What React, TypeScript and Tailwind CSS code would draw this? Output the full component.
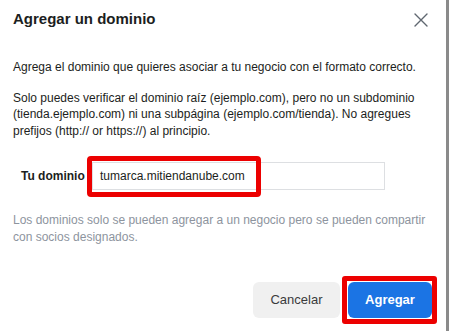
import React from "react";

export default function App() {
  return (
    <div className="w-[449px] h-[331px] flex bg-white overflow-hidden" style={{ fontFamily: '"Liberation Sans", Arial, sans-serif' }}>
      <div className="relative flex-1 flex flex-col bg-white text-[#1c1e21]">
        {/* Header */}
        <div className="flex items-start justify-between pl-[13px] pr-[18px] pt-[9px]">
          <h1 className="text-[15px] leading-[20px] font-bold text-[#1c1e21]">Agregar un dominio</h1>
          <button className="mt-[4px] text-[#606770]" aria-label="Cerrar">
            <svg width="14" height="14" viewBox="0 0 14 14" fill="none" stroke="currentColor" strokeWidth="1.4" strokeLinecap="round">
              <path d="M1 1 L13 13 M13 1 L1 13" />
            </svg>
          </button>
        </div>

        {/* Body */}
        <div className="px-[13px] pt-[30px] text-[12px] leading-[16.7px]">
          <p>Agrega el dominio que quieres asociar a tu negocio con el formato correcto.</p>
          <p className="mt-[14px]">
            Solo puedes verificar el dominio raíz (ejemplo.com), pero no un subdominio (tienda.ejemplo.com) ni una subpágina (ejemplo.com/tienda). No agregues prefijos (http:// or https://) al principio.
          </p>
        </div>

        {/* Input row */}
        <div className="relative flex items-center mt-[22px] pl-[21px]">
          <label className="text-[12px] font-bold w-[71px] text-[#1c1e21]">Tu dominio</label>
          <div className="w-[293px] h-[28px] border border-[#dddfe2] flex items-center pl-[7px] text-[12px] text-[#1c1e21]">
            tumarca.mitiendanube.com
          </div>
          <div className="absolute left-[87px] top-[-6px] w-[174px] h-[41px] border-[5px] border-[#ec0000] rounded-[4px] pointer-events-none" />
        </div>

        {/* Helper */}
        <p className="px-[13px] mt-[22px] text-[12px] leading-[16.7px] text-[#8d949e]">
          Los dominios solo se pueden agregar a un negocio pero se pueden compartir con socios designados.
        </p>

        {/* Footer */}
        <div className="relative flex justify-end gap-[8px] mt-[37px] pr-[14px]">
          <button className="w-[87px] h-[36px] rounded-[6px] bg-[#f0f0f0] text-[13px] text-[#3a3b3c]">Cancelar</button>
          <button className="w-[84px] h-[36px] rounded-[6px] bg-[#1b74e4] text-[13px] font-bold text-white">Agregar</button>
          <div className="absolute right-[9px] top-[-6px] w-[95px] h-[48px] border-[5px] border-[#ec0000] rounded-[3px] pointer-events-none" />
        </div>
      </div>
      <div className="w-[3px] h-full bg-[#8a8a8a]" />
    </div>
  );
}
